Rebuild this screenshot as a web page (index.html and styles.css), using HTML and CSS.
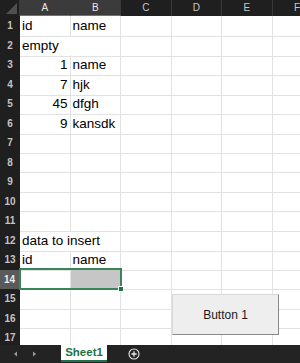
FILE: index.html
```html
<!DOCTYPE html>
<html lang="en">
<head>
  <meta charset="UTF-8">
  <link rel="stylesheet" href="styles.css">
  <title>Book1</title>
</head>
<body>
  <div class="sheet">
    <div class="row head">
      <div class="corner"></div>
      <div class="col-h sel">A</div>
      <div class="col-h sel">B</div>
      <div class="col-h">C</div>
      <div class="col-h">D</div>
      <div class="col-h">E</div>
      <div class="col-h">F</div>
    </div>
    <div class="row"><div class="num">1</div><div class="cell">id</div><div class="cell">name</div><div class="cell"></div><div class="cell"></div><div class="cell"></div><div class="cell"></div></div>
    <div class="row"><div class="num">2</div><div class="cell over">empty</div><div class="cell"></div><div class="cell"></div><div class="cell"></div><div class="cell"></div><div class="cell"></div></div>
    <div class="row"><div class="num">3</div><div class="cell right">1</div><div class="cell">name</div><div class="cell"></div><div class="cell"></div><div class="cell"></div><div class="cell"></div></div>
    <div class="row"><div class="num">4</div><div class="cell right">7</div><div class="cell">hjk</div><div class="cell"></div><div class="cell"></div><div class="cell"></div><div class="cell"></div></div>
    <div class="row"><div class="num">5</div><div class="cell right">45</div><div class="cell">dfgh</div><div class="cell"></div><div class="cell"></div><div class="cell"></div><div class="cell"></div></div>
    <div class="row"><div class="num">6</div><div class="cell right">9</div><div class="cell">kansdk</div><div class="cell"></div><div class="cell"></div><div class="cell"></div><div class="cell"></div></div>
    <div class="row"><div class="num">7</div><div class="cell"></div><div class="cell"></div><div class="cell"></div><div class="cell"></div><div class="cell"></div><div class="cell"></div></div>
    <div class="row"><div class="num">8</div><div class="cell"></div><div class="cell"></div><div class="cell"></div><div class="cell"></div><div class="cell"></div><div class="cell"></div></div>
    <div class="row"><div class="num">9</div><div class="cell"></div><div class="cell"></div><div class="cell"></div><div class="cell"></div><div class="cell"></div><div class="cell"></div></div>
    <div class="row"><div class="num">10</div><div class="cell"></div><div class="cell"></div><div class="cell"></div><div class="cell"></div><div class="cell"></div><div class="cell"></div></div>
    <div class="row"><div class="num">11</div><div class="cell"></div><div class="cell"></div><div class="cell"></div><div class="cell"></div><div class="cell"></div><div class="cell"></div></div>
    <div class="row"><div class="num">12</div><div class="cell over">data to insert</div><div class="cell no-line"></div><div class="cell"></div><div class="cell"></div><div class="cell"></div><div class="cell"></div></div>
    <div class="row"><div class="num">13</div><div class="cell">id</div><div class="cell">name</div><div class="cell"></div><div class="cell"></div><div class="cell"></div><div class="cell"></div></div>
    <div class="row"><div class="num active">14</div><div class="cell"></div><div class="cell filled"></div><div class="cell"></div><div class="cell"></div><div class="cell"></div><div class="cell"></div></div>
    <div class="row"><div class="num">15</div><div class="cell"></div><div class="cell"></div><div class="cell"></div><div class="cell"></div><div class="cell"></div><div class="cell"></div></div>
    <div class="row"><div class="num">16</div><div class="cell"></div><div class="cell"></div><div class="cell"></div><div class="cell"></div><div class="cell"></div><div class="cell"></div></div>
    <div class="row"><div class="num">17</div><div class="cell"></div><div class="cell"></div><div class="cell"></div><div class="cell"></div><div class="cell"></div><div class="cell"></div></div>

    <div class="selection"><span class="handle"></span></div>
    <div class="form-button">Button 1</div>
  </div>

  <div class="tabs">
    <div class="arrows">
      <svg width="6" height="6" viewBox="0 0 6 6"><path d="M4 0.5 L1 3 L4 5.5 Z" fill="#9a9a9a"/></svg>
      <svg width="6" height="6" viewBox="0 0 6 6"><path d="M2 0.5 L5 3 L2 5.5 Z" fill="#9a9a9a"/></svg>
    </div>
    <div class="tab">Sheet1</div>
    <div class="add">
      <svg width="12" height="12" viewBox="0 0 12 12">
        <circle cx="6" cy="6" r="5" fill="none" stroke="#e8e8e8" stroke-width="1.1"/>
        <path d="M6 3.3 V8.7 M3.3 6 H8.7" stroke="#e8e8e8" stroke-width="1.3"/>
      </svg>
    </div>
  </div>
</body>
</html>
```

FILE: styles.css
```css
body {
  margin: 0;
  width: 300px;
  height: 363px;
  overflow: hidden;
  background: #fff;
  font-family: 'Liberation Sans', Arial, sans-serif;
}

.sheet {
  position: relative;
  height: 345px;
  overflow: hidden;
}

.row {
  display: grid;
  grid-template-columns: 20px 50.5px 50.5px 50.5px 50.5px 50.5px 50px;
  height: 19.5px;
}

.row.head {
  height: 16px;
  background: #1f1f1f;
}

.corner {
  position: relative;
  background: #1f1f1f;
  border-right: 1px solid #3a3a3a;
}

.corner::after {
  content: '';
  position: absolute;
  right: 2px;
  bottom: 2px;
  border-left: 11px solid transparent;
  border-bottom: 11px solid #4f4f4f;
}

.col-h {
  color: #c8c8c8;
  font-size: 10px;
  line-height: 16px;
  text-align: center;
  border-right: 1px solid #3a3a3a;
  box-sizing: border-box;
}

.col-h.sel {
  background: #3b3b3b;
  color: #e6e6e6;
  border-bottom: 1px solid #3f8f5f;
  line-height: 15px;
}

.num {
  background: #1f1f1f;
  color: #c4c4c4;
  font-size: 10px;
  font-weight: bold;
  line-height: 19.5px;
  text-align: center;
  border-bottom: 1px solid #2e2e2e;
  box-sizing: border-box;
}

.num.active {
  background: #5a5a5a;
  color: #eaeaea;
  border-right: 1px solid #3f8f5f;
}

.cell {
  border-right: 1px solid #e2e2e2;
  border-bottom: 1px solid #e2e2e2;
  box-sizing: border-box;
  font-size: 13.5px;
  line-height: 20px;
  padding: 0 2px;
  color: #000;
  white-space: nowrap;
}

.cell.right {
  text-align: right;
}

.cell.over {
  overflow: visible;
  border-right-color: transparent;
}

.cell.filled {
  background: #c6c6c6;
}

.selection {
  position: absolute;
  left: 19px;
  top: 268px;
  width: 103px;
  height: 22px;
  border: 2px solid #3a8558;
  box-sizing: border-box;
}

.handle {
  position: absolute;
  right: -4px;
  bottom: -4px;
  width: 4px;
  height: 4px;
  background: #217346;
  border: 1px solid #fff;
}

.form-button {
  position: absolute;
  left: 172px;
  top: 294px;
  width: 107px;
  height: 41px;
  box-sizing: border-box;
  background: #eeeeee;
  border-top: 1px solid #d8d8d8;
  border-left: 1px solid #d8d8d8;
  border-right: 1px solid #8a8a8a;
  border-bottom: 1px solid #8a8a8a;
  font-size: 12px;
  color: #1a1a1a;
  display: flex;
  align-items: center;
  justify-content: center;
}

.tabs {
  height: 18px;
  background: #232323;
  display: flex;
  align-items: stretch;
}

.arrows {
  width: 61px;
  display: flex;
  align-items: center;
  gap: 12px;
  padding-left: 13px;
  box-sizing: border-box;
}

.tab {
  width: 46px;
  background: #fff;
  color: #217346;
  font-size: 11.5px;
  font-weight: bold;
  text-align: center;
  line-height: 15px;
  border-bottom: 2px solid #217346;
  box-sizing: border-box;
  height: 17px;
}

.add {
  display: flex;
  align-items: center;
  padding-left: 21px;
}
```
